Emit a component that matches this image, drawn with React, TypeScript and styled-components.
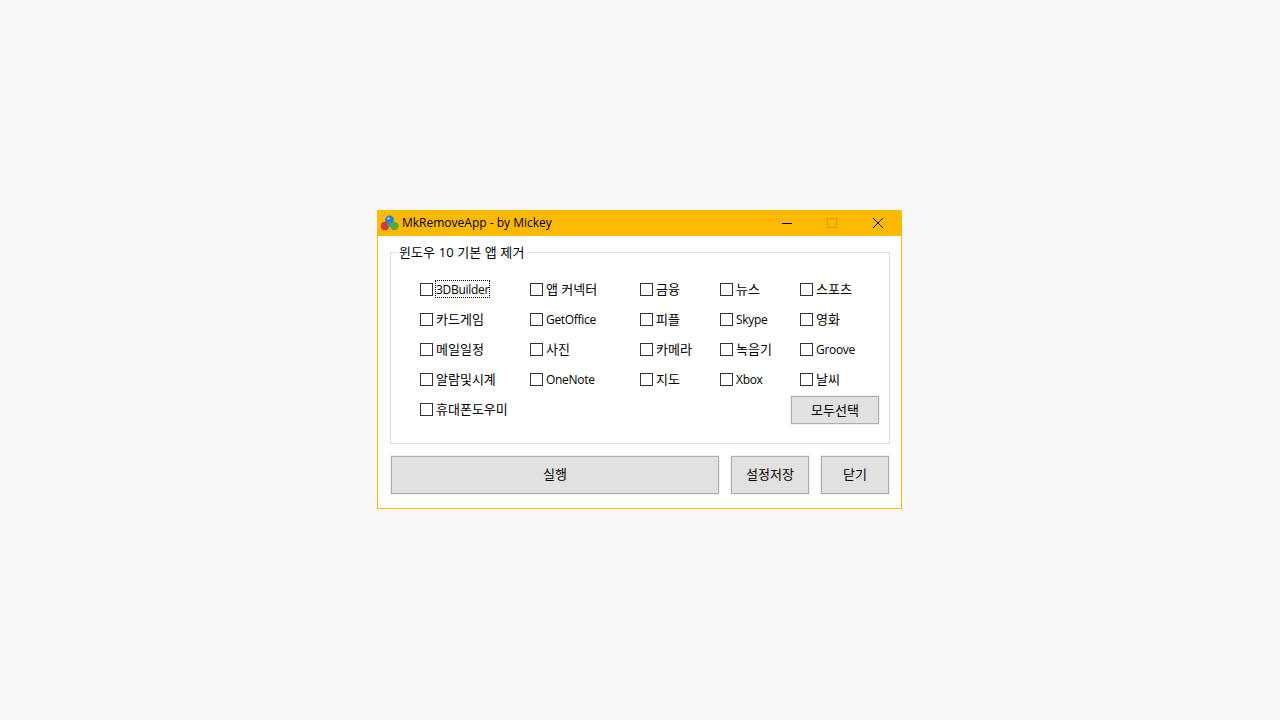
import React from 'react';
import styled, { createGlobalStyle } from 'styled-components';

const GlobalStyle = createGlobalStyle`
  html, body {
    margin: 0;
    padding: 0;
    background: #f8f8f8;
  }
  body {
    font-family: "Open Sans", "Noto Sans CJK KR", sans-serif;
    font-size: 12px;
    color: #000;
  }
`;

const apps: string[] = [
  '3DBuilder', '앱 커넥터', '금융', '뉴스', '스포츠',
  '카드게임', 'GetOffice', '피플', 'Skype', '영화',
  '메일일정', '사진', '카메라', '녹음기', 'Groove',
  '알람및시계', 'OneNote', '지도', 'Xbox', '날씨',
  '휴대폰도우미',
];

const isHangul = (text: string) => /[가-힣]/.test(text);

const AppIcon = () => (
  <svg width="18" height="16" viewBox="0 0 18 16">
    <circle cx="8.5" cy="5" r="4.5" fill="#2f7fd0" />
    <circle cx="4" cy="11" r="4.2" fill="#d9343c" />
    <circle cx="13.5" cy="11" r="4.2" fill="#57a83a" />
    <circle cx="8.7" cy="9.5" r="2.4" fill="#2ba5a0" />
    <circle cx="7.5" cy="3.5" r="1.2" fill="#9fd0f5" />
  </svg>
);

export default function App() {
  return (
    <>
      <GlobalStyle />
      <Page>
        <Window>
          <TitleBar>
            <TitleIcon>
              <AppIcon />
            </TitleIcon>
            <Title>MkRemoveApp - by Mickey</Title>
            <WindowButton $width={45}>
              <svg width="10" height="10" viewBox="0 0 10 10">
                <path d="M0 5.5H10" stroke="#000" />
              </svg>
            </WindowButton>
            <WindowButton $width={46}>
              <svg width="10" height="10" viewBox="0 0 10 10">
                <rect x="0.5" y="0.5" width="9" height="9" fill="none" stroke="#d69c00" />
              </svg>
            </WindowButton>
            <WindowButton $width={29}>
              <svg width="10" height="10" viewBox="0 0 10 10">
                <path d="M0 0L10 10M10 0L0 10" stroke="#000" />
              </svg>
            </WindowButton>
          </TitleBar>
          <Content>
            <Group>
              <GroupTitle>윈도우 10 기본 앱 제거</GroupTitle>
              <AppGrid>
                {apps.map((name) => (
                  <AppOption key={name}>
                    <Check type="checkbox" />
                    <OptionText $focused={name === '3DBuilder'} $hangul={isHangul(name)}>
                      {name}
                    </OptionText>
                  </AppOption>
                ))}
                <SelectAll>모두선택</SelectAll>
              </AppGrid>
            </Group>
            <Actions>
              <ActionButton $width={328}>실행</ActionButton>
              <ActionButton $width={78}>설정저장</ActionButton>
              <ActionButton $width={68}>닫기</ActionButton>
            </Actions>
          </Content>
        </Window>
      </Page>
    </>
  );
}

const Page = styled.div`
  min-height: 720px;
  box-sizing: border-box;
  padding: 210px 0 0 377px;
`;

const Window = styled.div`
  width: 525px;
  height: 299px;
  box-sizing: border-box;
  background: #fff;
  border: 1px solid #ffb900;
  border-top: 0;
`;

const TitleBar = styled.div`
  display: flex;
  align-items: center;
  height: 26px;
  margin: 0 -1px;
  background: #ffb900;
`;

const TitleIcon = styled.div`
  display: flex;
  width: 18px;
  height: 16px;
  margin: 0 3px 0 4px;
`;

const Title = styled.div`
  flex: 1;
  line-height: 16px;
  white-space: nowrap;
`;

const WindowButton = styled.div<{ $width: number }>`
  display: flex;
  align-items: center;
  width: ${({ $width }) => $width}px;
  height: 26px;
`;

const Content = styled.div`
  padding: 8px 11px 0 12px;
`;

const Group = styled.fieldset`
  width: 500px;
  height: 200px;
  box-sizing: border-box;
  margin: 0;
  padding: 14px 0 0 29px;
  border: 1px solid #dcdcdc;
`;

const GroupTitle = styled.legend`
  height: 16px;
  margin-left: -24px;
  padding: 0 3px;
  font-size: 13px;
  line-height: 16px;
  letter-spacing: 0.1px;
`;

const AppGrid = styled.div`
  display: grid;
  grid-template-columns: 110px 110px 80px 80px 79px;
  grid-auto-rows: 30px;
  align-items: center;
`;

const AppOption = styled.label`
  display: flex;
  align-items: flex-start;
  gap: 3px;
  height: 16px;
  white-space: nowrap;
`;

const Check = styled.input`
  appearance: none;
  width: 13px;
  height: 13px;
  box-sizing: border-box;
  margin: 2px 0 0;
  background: #fff;
  border: 1px solid #333;
  border-radius: 0;
`;

const OptionText = styled.span<{ $focused?: boolean; $hangul?: boolean }>`
  display: block;
  height: 16px;
  line-height: ${({ $hangul }) => ($hangul ? '16px' : '18px')};
  font-size: ${({ $hangul }) => ($hangul ? '13px' : '12px')};
  letter-spacing: ${({ $hangul }) => ($hangul ? '0' : '-0.3px')};
  outline: ${({ $focused }) => ($focused ? '1px dotted #000' : 'none')};
`;

const PlainButton = styled.button`
  box-sizing: border-box;
  margin: 0;
  padding: 0 0 2px;
  background: #e1e1e1;
  border: 1px solid #adadad;
  box-shadow: 0 0 0 1px #f0f0f0;
  border-radius: 0;
  font: inherit;
  font-size: 13px;
  color: #000;
`;

const SelectAll = styled(PlainButton)`
  grid-column: 5;
  grid-row: 5;
  justify-self: end;
  align-self: end;
  width: 88px;
  height: 28px;
`;

const Actions = styled.div`
  display: flex;
  gap: 12px;
  margin: 12px 0 0 1px;
`;

const ActionButton = styled(PlainButton)<{ $width: number }>`
  width: ${({ $width }) => $width}px;
  height: 38px;
  padding-bottom: 4px;
`;
